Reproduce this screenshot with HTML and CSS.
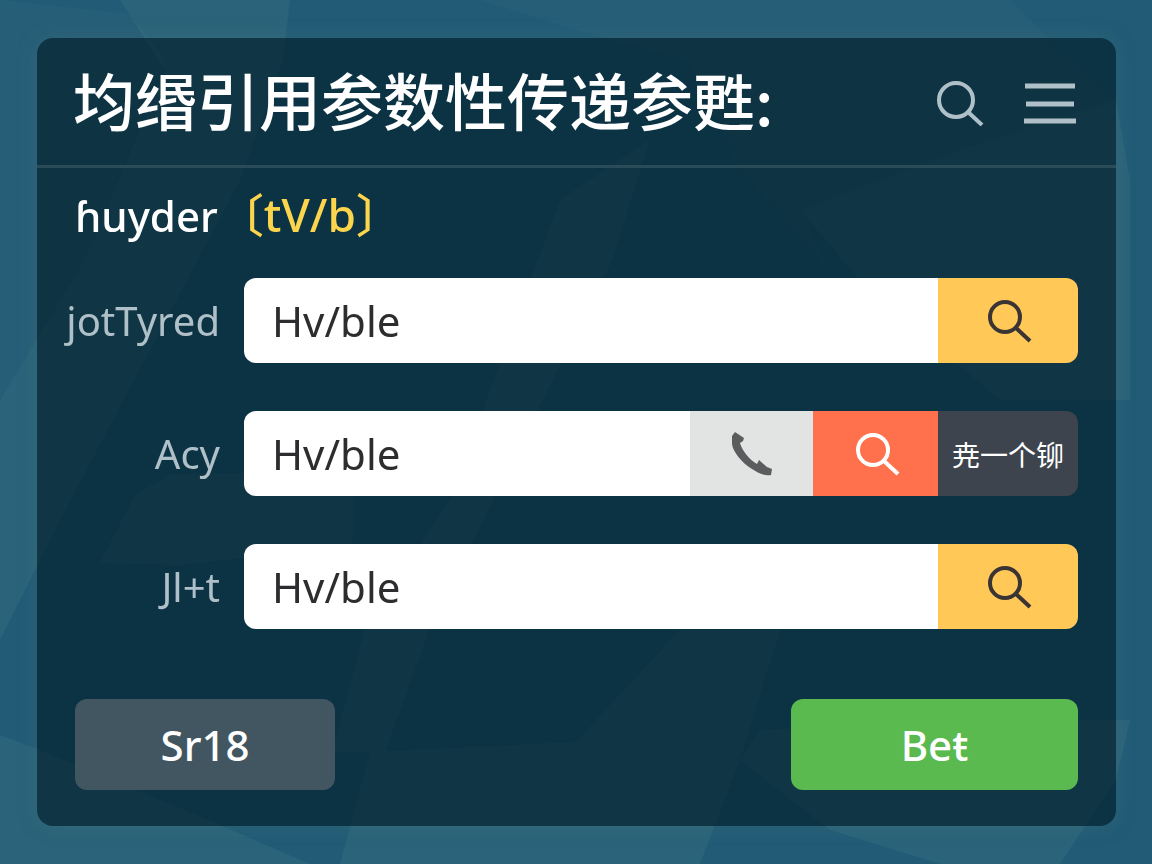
FILE: index.html
```html
<!DOCTYPE html>
<html lang="zh-CN">
<head>
    <meta charset="UTF-8">
    <meta name="viewport" content="width=device-width, initial-scale=1.0">
    <title>均缗引用参数性传递参甦</title>
    <link rel="stylesheet" href="styles.css">
</head>
<body>
    <svg class="backdrop" viewBox="0 0 1152 864" preserveAspectRatio="none" aria-hidden="true">
        <path d="M0 0 130 14 165 60 85 260 0 400Z" class="faint"/>
        <path d="M120 0H290L283 60 240 180 60 520 0 640V400L85 260 165 70Z"/>
        <path d="M650 140 612 260 430 628 385 752H332L365 630 450 500 560 200Z"/>
        <path d="M100 563 135 495 170 475 355 470 352 545 180 565Z"/>
        <path d="M480 0H1010L1060 50 1116 100 960 150 800 210 830 270 740 170 690 60 575 30Z" class="faint"/>
        <path d="M800 210 960 150 1116 100 1130 180V400H1000L860 280Z"/>
        <path d="M680 630H780L740 760 700 864H340L370 752 576 742Z"/>
        <path d="M0 735 40 750 220 825 310 864H0Z"/>
        <path d="M740 760 830 830 940 864H1060L1116 780 1130 720H980L760 730Z"/>
    </svg>

    <main class="panel">
        <header class="panel-header">
            <h1>均缗引用参数性传递参甦:</h1>
            <div class="header-icons">
                <button class="icon-btn" type="button" aria-label="Search">
                    <svg class="icon" viewBox="0 0 48 48"><circle cx="20" cy="22" r="17"/><path d="M32 34 46 47"/></svg>
                </button>
                <button class="icon-btn" type="button" aria-label="Menu">
                    <svg class="icon menu-icon" viewBox="0 0 52 48"><path d="M1 8H51M2 26H50M0 43H52"/></svg>
                </button>
            </div>
        </header>

        <form class="panel-body">
            <h2>ɦuyder<span class="hint">〔tV/b〕</span></h2>

            <div class="rows">
                <div class="row">
                    <label for="first">jotTyred</label>
                    <div class="field">
                        <input id="first" type="text" value="Hv/ble">
                        <button class="addon yellow" type="button" aria-label="Search">
                            <svg class="icon" viewBox="0 0 48 48"><circle cx="21" cy="20" r="15"/><path d="M32 31 46 44"/></svg>
                        </button>
                    </div>
                </div>

                <div class="row">
                    <label for="second">Acy</label>
                    <div class="field">
                        <input id="second" type="text" value="Hv/ble">
                        <button class="addon grey" type="button" aria-label="Call">
                            <svg class="icon phone-icon" viewBox="0 0 48 48"><path d="M7 2 10 4 16 8 15 11 12 13C14 21 22 30 29 34L31 30 39 37 44 39 43 45C36 46 30 43 24 39 14 33 5 22 4 14L4 6Z"/></svg>
                        </button>
                        <button class="addon orange" type="button" aria-label="Search">
                            <svg class="icon" viewBox="0 0 48 48"><circle cx="21" cy="20" r="15"/><path d="M32 31 46 44"/></svg>
                        </button>
                        <button class="addon dark" type="button">尭一个铆</button>
                    </div>
                </div>

                <div class="row">
                    <label for="third">Jl+t</label>
                    <div class="field">
                        <input id="third" type="text" value="Hv/ble">
                        <button class="addon yellow" type="button" aria-label="Search">
                            <svg class="icon" viewBox="0 0 48 48"><circle cx="21" cy="20" r="15"/><path d="M32 31 46 44"/></svg>
                        </button>
                    </div>
                </div>
            </div>

            <div class="actions">
                <button class="btn btn-secondary" type="button">Sr18</button>
                <button class="btn btn-primary" type="submit">Beŧ</button>
            </div>
        </form>
    </main>
</body>
</html>
```

FILE: styles.css
```css
* {
    box-sizing: border-box;
}
body {
    margin: 0;
    min-height: 100vh;
    padding: 38px 36px 38px 37px;
    background: #215b76;
    color: #fff;
    font-family: "Noto Sans", "Noto Sans CJK SC", sans-serif;
}
button,
input {
    margin: 0;
    border: none;
    font-family: inherit;
}
button {
    padding: 0;
    cursor: pointer;
}

/* Faceted background behind the panel */
.backdrop {
    position: fixed;
    inset: 0;
    z-index: -1;
    width: 100%;
    height: 100%;
    fill: rgba(70, 125, 140, 0.24);
}
.backdrop .faint {
    fill: rgba(70, 125, 140, 0.12);
}

.panel {
    border-radius: 16px;
    background: rgba(0, 27, 37, 0.62);
    box-shadow: 0 0 20px rgba(80, 120, 120, 0.3);
}
.panel-header {
    display: flex;
    align-items: center;
    justify-content: space-between;
    height: 130px;
    padding: 0 40px 0 36px;
    border-bottom: 3px solid #2a4c58;
}
h1 {
    margin: 0;
    padding-bottom: 6px;
    font-family: "Noto Sans CJK SC", sans-serif;
    font-size: 62px;
    font-weight: 500;
    line-height: 80px;
    white-space: nowrap;
}
.header-icons {
    display: flex;
    align-items: center;
    gap: 40px;
}
.icon-btn {
    background: none;
    color: #b0c0c8;
}
.icon {
    display: block;
    width: 48px;
    height: 48px;
    fill: none;
    stroke: currentColor;
    stroke-width: 4;
}
.menu-icon {
    width: 52px;
    stroke-width: 5;
}
.phone-icon {
    fill: currentColor;
    stroke: none;
}

.panel-body {
    padding: 16px 38px 36px;
}
h2 {
    margin: 0 0 32px;
    font-size: 42px;
    font-weight: 500;
    line-height: 60px;
}
.hint {
    color: #fcd54c;
    font-size: 46px;
}
.rows {
    display: grid;
    gap: 48px;
}
.row {
    display: grid;
    grid-template-columns: 145px 1fr;
    align-items: center;
    gap: 24px;
}
.row label {
    justify-self: end;
    color: #b0c0c8;
    font-size: 40px;
    white-space: nowrap;
}
.field {
    display: flex;
    height: 85px;
    overflow: hidden;
    border-radius: 12px;
}
.field input {
    flex: 1;
    min-width: 0;
    padding: 0 28px;
    background: #fff;
    color: #2d2d2f;
    font-size: 42px;
}
.addon {
    display: flex;
    flex: 0 0 140px;
    align-items: center;
    justify-content: center;
    color: #fff;
    font-size: 28px;
}
.yellow {
    background: #ffc857;
    color: #3a3435;
}
.grey {
    flex-basis: 123px;
    background: #e2e3e3;
    color: #5a5c5d;
}
.orange {
    flex-basis: 125px;
    background: #ff704d;
}
.dark {
    background: #3e444d;
}

.actions {
    display: flex;
    justify-content: space-between;
    margin-top: 70px;
}
.btn {
    width: 260px;
    height: 91px;
    border-radius: 12px;
    color: #fff;
    font-size: 42px;
    font-weight: 500;
}
.btn-secondary {
    background: #415660;
}
.btn-primary {
    width: 287px;
    background: #5aba50;
}
```
